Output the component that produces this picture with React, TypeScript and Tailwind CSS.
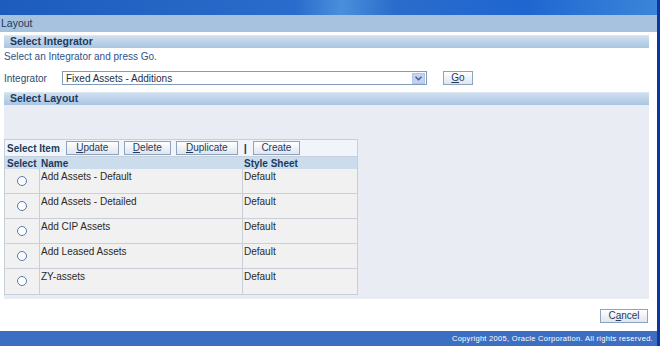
import React from 'react';

const rows = [
  { name: 'Add Assets - Default', sheet: 'Default' },
  { name: 'Add Assets - Detailed', sheet: 'Default' },
  { name: 'Add CIP Assets', sheet: 'Default' },
  { name: 'Add Leased Assets', sheet: 'Default' },
  { name: 'ZY-assets', sheet: 'Default' },
];

const Btn: React.FC<{ label: string; accessKey?: number; className?: string }> = ({
  label,
  accessKey,
  className = '',
}) => (
  <div
    className={`flex items-center justify-center h-[14px] border border-[#8fa4bc] bg-[linear-gradient(#ffffff,#dfe6ee)] text-[10px] text-[#1f3b5e] leading-none ${className}`}
  >
    {accessKey === undefined ? (
      label
    ) : (
      <span>
        {label.slice(0, accessKey)}
        <span className="underline">{label[accessKey]}</span>
        {label.slice(accessKey + 1)}
      </span>
    )}
  </div>
);

const SectionBar: React.FC<{ title: string }> = ({ title }) => (
  <div className="h-[13px] border-t border-[#dbe7f3] bg-[linear-gradient(#cfdff0,#a9c5e2)] pl-[6px] flex items-center text-[10.5px] font-bold text-[#1d3a5c]">
    {title}
  </div>
);

const Radio = () => (
  <div className="w-[10px] h-[10px] rounded-full border border-[#5579b0] bg-white" />
);

export default function App() {
  return (
    <div
      className="w-[660px] h-[346px] overflow-hidden flex bg-white"
      style={{ fontFamily: '"Liberation Sans", Arial, sans-serif' }}
    >
      <div className="flex-1 flex flex-col">
        {/* title strip */}
        <div className="h-[15px] bg-[linear-gradient(90deg,#1d5cbc_0%,#2a6ccb_45%,#4a8fdc_52%,#2a6ccb_60%,#1f66d1_80%,#3b86d9_100%)]" />
        <div className="h-[17px] bg-[#a7c2df] flex items-center pl-[1px] text-[10.5px] text-[#1d3a5c]">
          Layout
        </div>

        <div className="flex-1 flex flex-col pl-[4px] pr-[8px] pt-[3px]">
          <SectionBar title="Select Integrator" />
          <div className="mt-[3px] text-[10px] text-[#2e5288] leading-[12px]">
            Select an Integrator and press Go.
          </div>

          <div className="mt-[8px] flex items-center h-[14px]">
            <div className="w-[58px] text-[10px] text-[#2b4a73]">Integrator</div>
            <div className="w-[365px] h-[14px] border border-[#7f9db9] flex items-center justify-between pl-[3px] pr-[1px]">
              <span className="text-[10px] text-[#1d2f48]">Fixed Assets - Additions</span>
              <div className="w-[13px] h-[11px] bg-[#c3d2f2] border border-[#b4c4ea] flex items-center justify-center">
                <svg width="7" height="5" viewBox="0 0 7 5">
                  <path d="M0.5 0.8 L3.5 3.8 L6.5 0.8" stroke="#4b5f86" strokeWidth="1.5" fill="none" />
                </svg>
              </div>
            </div>
            <Btn label="Go" accessKey={0} className="ml-[16px] w-[30px]" />
          </div>

          <div className="mt-[7px]">
            <SectionBar title="Select Layout" />
          </div>

          <div className="h-[194px] bg-[#e9edf3] pt-[34px]">
            <div className="w-[354px] border border-[#c5cfdc] bg-[#f1f1f1]">
              <div className="h-[17px] bg-[#f0f5fb] flex items-center pl-[2px] border-b border-[#c5cfdc]">
                <span className="text-[10px] font-bold text-[#1d3a5c] mr-[6px]">Select Item</span>
                <Btn label="Update" accessKey={0} className="w-[53px]" />
                <Btn label="Delete" accessKey={0} className="w-[47px] ml-[5px]" />
                <Btn label="Duplicate" accessKey={0} className="w-[62px] ml-[5px]" />
                <span className="mx-[6px] text-[11px] font-bold text-[#1d3a5c]">|</span>
                <Btn label="Create" className="w-[47px]" />
              </div>
              <div className="h-[12px] bg-[#cbdcec] flex items-center text-[10px] font-bold text-[#1d3a5c]">
                <div className="w-[35px] pl-[2px]">Select</div>
                <div className="w-[203px] pl-[1px]">Name</div>
                <div className="flex-1 pl-[1px]">Style Sheet</div>
              </div>
              {rows.map((r, i) => (
                <div
                  key={i}
                  className={`h-[25px] flex text-[10px] leading-[12px] text-[#2a2a2a] ${i < rows.length - 1 ? 'border-b border-[#c9ced8]' : 'h-[24px]'}`}
                >
                  <div className="w-[35px] border-r border-[#c9ced8] flex justify-center pt-[7px]">
                    <Radio />
                  </div>
                  <div className="w-[203px] border-r border-[#c9ced8] pl-[1px] pt-[2px]">{r.name}</div>
                  <div className="flex-1 pl-[1px] pt-[2px]">{r.sheet}</div>
                </div>
              ))}
            </div>
          </div>

          <div className="flex-1 flex justify-end items-start pt-[10px] pr-[1px]">
            <Btn label="Cancel" accessKey={1} className="w-[48px]" />
          </div>
        </div>

        <div className="h-[15px] bg-[#3c6fc2] flex items-center justify-end pr-[4px] text-[7.5px] tracking-[0.3px] text-white">
          Copyright 2005, Oracle Corporation. All rights reserved.
        </div>
      </div>
      <div className="w-[3px] bg-[#0b36a6]" />
    </div>
  );
}
